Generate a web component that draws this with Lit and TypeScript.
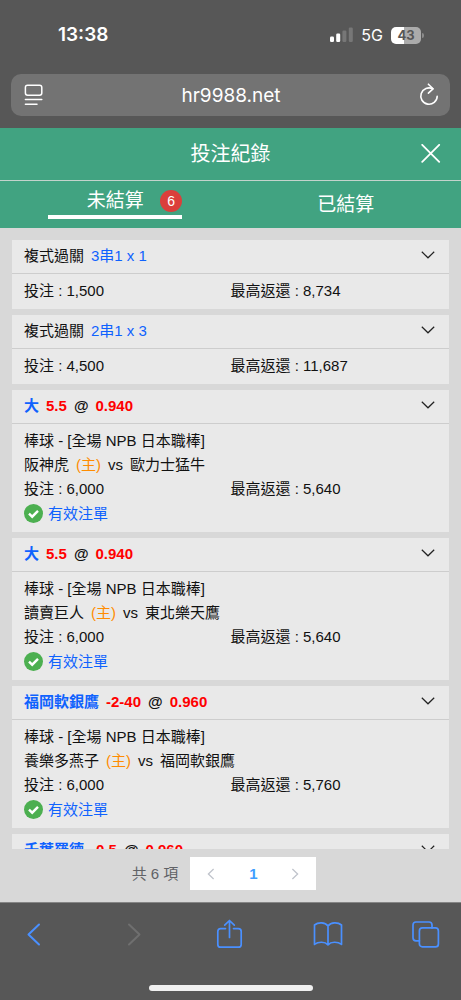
import { LitElement, html, css, svg, nothing } from "lit";
import { customElement, property, state } from "lit/decorators.js";
import { classMap } from "lit/directives/class-map.js";

interface Bet {
  kind: "combo" | "single";
  title: string;
  detail: string;
  odds?: string;
  league?: string;
  home?: string;
  away?: string;
  stake?: string;
  payout?: string;
}

const BETS: Bet[] = [
  { kind: "combo", title: "複式過關", detail: "3串1 x 1", stake: "1,500", payout: "8,734" },
  { kind: "combo", title: "複式過關", detail: "2串1 x 3", stake: "4,500", payout: "11,687" },
  { kind: "single", title: "大", detail: "5.5", odds: "0.940", league: "棒球 - [全場 NPB 日本職棒]", home: "阪神虎", away: "歐力士猛牛", stake: "6,000", payout: "5,640" },
  { kind: "single", title: "大", detail: "5.5", odds: "0.940", league: "棒球 - [全場 NPB 日本職棒]", home: "讀賣巨人", away: "東北樂天鷹", stake: "6,000", payout: "5,640" },
  { kind: "single", title: "福岡軟銀鷹", detail: "-2-40", odds: "0.960", league: "棒球 - [全場 NPB 日本職棒]", home: "養樂多燕子", away: "福岡軟銀鷹", stake: "6,000", payout: "5,760" },
  { kind: "single", title: "千葉羅德", detail: "-0.5", odds: "0.960" },
];

const resetButton = css`
  * { box-sizing: border-box; }
  button {
    margin: 0;
    padding: 0;
    border: 0;
    background: none;
    color: inherit;
    font: inherit;
    cursor: pointer;
  }
  svg { display: block; fill: none; }
`;

@customElement("status-bar")
export class StatusBar extends LitElement {
  static styles = css`
    :host {
      display: flex;
      justify-content: space-between;
      align-items: center;
      height: 74px;
      padding: 0 37px 4px 58px;
      color: #fff;
      font-family: Inter, sans-serif;
    }
    .time { font-size: 19px; line-height: 24px; font-weight: 600; }
    .right { display: flex; align-items: center; gap: 8px; }
    .net { font-size: 16px; line-height: 24px; }
    .battery { display: flex; align-items: center; gap: 1px; }
    .cell {
      width: 30px;
      height: 17px;
      border-radius: 5px;
      background: linear-gradient(90deg, #fff 43%, #ababab 43%);
      color: #575757;
      font-size: 13px;
      line-height: 17px;
      font-weight: 700;
      text-align: center;
    }
    .tip { width: 2px; height: 5px; border-radius: 0 2px 2px 0; background: #8b8b8b; }
    svg { display: block; }
  `;
  render() {
    return html`
      <span class="time">13:38</span>
      <span class="right">
        <svg width="23" height="16" viewBox="0 0 23 16" aria-hidden="true">
          <rect x="0" y="9.5" width="4" height="5.5" rx="1.2" fill="#fff" />
          <rect x="6.2" y="6.5" width="4" height="8.5" rx="1.2" fill="#fff" />
          <rect x="12.4" y="3.5" width="4" height="11.5" rx="1.2" fill="#777" />
          <rect x="18.8" y="0.5" width="4" height="14.5" rx="1.2" fill="#777" />
        </svg>
        <span class="net">5G</span>
        <span class="battery"><span class="cell">43</span><span class="tip"></span></span>
      </span>
    `;
  }
}

@customElement("address-bar")
export class AddressBar extends LitElement {
  static styles = [resetButton, css`
    :host { display: block; padding: 0 11px 12px; }
    .bar {
      display: flex;
      align-items: center;
      height: 42px;
      padding: 0 10px 0 13px;
      border-radius: 10px;
      background: #737373;
      color: #fff;
    }
    .url {
      flex: 1;
      min-width: 0;
      border: 0;
      padding: 2px 0 0;
      outline: 0;
      background: none;
      color: #fff;
      font: 19px/24px Inter, sans-serif;
      text-align: center;
    }
  `];
  render() {
    return html`
      <div class="bar">
        <button aria-label="Page settings">
          <svg width="20" height="22" viewBox="0 0 20 22" stroke="#fff" stroke-width="1.5" stroke-linecap="round">
            <rect x="1.4" y="1.2" width="16.4" height="10" rx="2.2" />
            <path d="M1.4 15.5H17.8M1.4 20.3H13" />
          </svg>
        </button>
        <input class="url" aria-label="Address" value="hr9988.net" readonly />
        <button aria-label="Reload">
          <svg width="22" height="24" viewBox="0 0 22 24" stroke="#fff" stroke-width="1.6" stroke-linecap="round" stroke-linejoin="round">
            <path d="M19.2 13.2A8.2 8.2 0 1 1 14.8 5.8" />
            <path d="M10.4 1.2L15 5.8L10.4 10.2" />
          </svg>
        </button>
      </div>
    `;
  }
}

@customElement("bet-card")
export class BetCard extends LitElement {
  @property({ attribute: false }) bet!: Bet;

  static styles = [resetButton, css`
    :host { display: block; background: #e9e9e9; color: #111; font-size: 15px; line-height: 24px; }
    .head {
      display: flex;
      align-items: center;
      justify-content: space-between;
      width: 100%;
      height: 34px;
      padding: 0 14px 3px 12px;
      border-bottom: 1px solid #cdcdcd;
      text-align: left;
    }
    .label, .teams { display: flex; gap: 7px; }
    .label { padding-top: 1px; }
    .single { font-weight: 700; }
    .blue { color: #0f62fe; }
    .red { color: #ff0000; }
    .orange { color: #ff8c00; }
    .body { padding: 5px 12px 6px; }
    .amounts { display: grid; grid-template-columns: 1fr 1fr; }
    .valid { display: flex; align-items: center; gap: 5px; height: 25px; color: #0f62fe; }
  `];

  render() {
    const b = this.bet;
    const single = b.kind === "single";
    return html`
      <button class="head">
        <span class=${classMap({ label: true, single })}>
          <span class=${classMap({ blue: single })}>${b.title}</span>
          <span class=${single ? "red" : "blue"}>${b.detail}</span>
          ${b.odds ? html`<span>@</span><span class="red">${b.odds}</span>` : nothing}
        </span>
        <svg width="14" height="8" viewBox="0 0 14 8" stroke="#222" stroke-width="1.2" aria-hidden="true">
          <path d="M0.8 0.8L7 6.8L13.2 0.8" />
        </svg>
      </button>
      ${b.stake
        ? html`<div class="body">
            ${single
              ? html`<div>${b.league}</div>
                  <div class="teams">
                    <span>${b.home}</span><span class="orange">(主)</span><span>vs</span><span>${b.away}</span>
                  </div>`
              : nothing}
            <div class="amounts"><span>投注 : ${b.stake}</span><span>最高返還 : ${b.payout}</span></div>
            ${single
              ? html`<div class="valid">
                  <svg width="19" height="19" viewBox="0 0 19 19" aria-hidden="true">
                    <circle cx="9.5" cy="9.5" r="9.5" fill="#4caf50" />
                    <path d="M5 9.6L8.2 12.7L14 6.8" stroke="#fff" stroke-width="2.4" />
                  </svg>
                  <span>有效注單</span>
                </div>`
              : nothing}
          </div>`
        : nothing}
    `;
  }
}

@customElement("browser-toolbar")
export class BrowserToolbar extends LitElement {
  static styles = [resetButton, css`
    :host { display: block; height: 98px; border-top: 1px solid #858585; color: #4a90ff; }
    .tools { display: flex; justify-content: space-between; padding: 11px 15px 0 14px; }
    .tools button { display: grid; place-items: center; width: 40px; height: 40px; }
    .tools .off { color: #6f6f6f; }
    .home { width: 164px; height: 6px; margin: 31px auto 0; border-radius: 3px; background: #f0f0f0; }
  `];
  private icon(shape: unknown) {
    return html`<svg width="30" height="32" viewBox="0 0 30 32" stroke="currentColor" stroke-width="1.7" stroke-linecap="round" stroke-linejoin="round">${shape}</svg>`;
  }
  render() {
    return html`
      <nav class="tools">
        <button aria-label="Back">${this.icon(svg`<path d="M20 6.5L9.5 16.5L20 26.5" stroke-width="2" />`)}</button>
        <button class="off" aria-label="Forward" disabled>${this.icon(svg`<path d="M12 6.5L22.5 16.5L12 26.5" stroke-width="2" />`)}</button>
        <button aria-label="Share">${this.icon(svg`
          <path d="M10.5 10.6H5.6Q2.8 10.6 2.8 13.4V26.4Q2.8 29.2 5.6 29.2H23.4Q26.2 29.2 26.2 26.4V13.4Q26.2 10.6 23.4 10.6H18.5" />
          <path d="M14.5 19.5V2.5M9.7 7.2L14.5 2.5L19.3 7.2" />`)}</button>
        <button aria-label="Bookmarks">${this.icon(svg`
          <path d="M15 8C12 4.2 5.5 3.8 1.5 7V26.4C5.5 23.4 12 23.6 15 26.8C18 23.6 24.5 23.4 28.5 26.4V7C24.5 3.8 18 4.2 15 8ZM15 8V26.8" />`)}</button>
        <button aria-label="Tabs">${this.icon(svg`
          <rect x="8.4" y="9.9" width="19" height="19" rx="3" />
          <path d="M8.4 22.8H5Q2 22.8 2 19.8V7Q2 4 5 4H18Q21 4 21 7V9.9" />`)}</button>
      </nav>
      <div class="home"></div>
    `;
  }
}

@customElement("app-root")
export class AppRoot extends LitElement {
  @state() private tab = 0;

  static styles = [resetButton, css`
    :host {
      display: flex;
      flex-direction: column;
      height: 100vh;
      background: #575757;
      font-family: "Liberation Sans", "Noto Sans CJK TC", sans-serif;
    }
    .page { flex: 1; min-height: 0; display: flex; flex-direction: column; background: #d8d8d8; }
    .top {
      display: grid;
      grid-template-columns: 1fr auto 1fr;
      align-items: center;
      height: 52px;
      padding: 0 20px;
      background: #41a381;
      color: #fff;
    }
    .top h1 { grid-column: 2; margin: 0; font-size: 20px; line-height: 28px; font-weight: 400; }
    .close { justify-self: end; }
    .tabs {
      display: grid;
      grid-template-columns: 1fr 1fr;
      height: 48px;
      border-top: 1px solid #c3d3cc;
      background: #41a381;
      color: #fff;
      font-size: 19px;
      line-height: 28px;
    }
    .tab { display: grid; place-items: center; }
    .name { position: relative; width: 134px; }
    .active .name { margin-bottom: 3px; border-bottom: 4px solid #fff; }
    .badge {
      position: absolute;
      right: 0;
      top: 3px;
      width: 22px;
      height: 22px;
      border-radius: 50%;
      background: #db3f3b;
      font-size: 14px;
      line-height: 22px;
      text-align: center;
    }
    .list {
      flex: 1;
      min-height: 0;
      display: flex;
      flex-direction: column;
      gap: 6px;
      padding: 12px 12px 0;
      overflow-y: auto;
      scrollbar-width: none;
    }
    .list bet-card { flex: none; }
    .pager {
      display: flex;
      justify-content: center;
      align-items: center;
      gap: 12px;
      padding: 8px 13px 12px 0;
      color: #606266;
      font-size: 15px;
      line-height: 24px;
    }
    .pages { display: flex; background: #fff; }
    .pages button { display: grid; place-items: center; width: 42px; height: 33px; }
    .pages .current { color: #409eff; font-weight: 700; }
  `];

  render() {
    return html`
      <status-bar></status-bar>
      <address-bar></address-bar>
      <main class="page">
        <header class="top">
          <h1>投注紀錄</h1>
          <button class="close" aria-label="關閉">
            <svg width="20" height="20" viewBox="0 0 20 20" stroke="#fff" stroke-width="1.8" stroke-linecap="round">
              <path d="M1.2 0.8L18.2 17.8M18.2 0.8L1.2 17.8" />
            </svg>
          </button>
        </header>
        <div class="tabs" role="tablist">
          ${["未結算", "已結算"].map((name, i) => html`
            <button
              role="tab"
              aria-selected=${this.tab === i}
              class=${classMap({ tab: true, active: this.tab === i })}
              @click=${() => (this.tab = i)}
            >
              <span class="name">${name}${i === 0 ? html`<span class="badge">${BETS.length}</span>` : nothing}</span>
            </button>`)}
        </div>
        <section class="list">${BETS.map((bet) => html`<bet-card .bet=${bet}></bet-card>`)}</section>
        <nav class="pager">
          <span>共 ${BETS.length} 項</span>
          <div class="pages">
            <button aria-label="上一頁" disabled>
              <svg width="8" height="12" viewBox="0 0 8 12" stroke="#c0c4cc" stroke-width="1.3"><path d="M6.6 1L1.4 6L6.6 11" /></svg>
            </button>
            <button class="current" aria-current="page">1</button>
            <button aria-label="下一頁" disabled>
              <svg width="8" height="12" viewBox="0 0 8 12" stroke="#c0c4cc" stroke-width="1.3"><path d="M1.4 1L6.6 6L1.4 11" /></svg>
            </button>
          </div>
        </nav>
      </main>
      <browser-toolbar></browser-toolbar>
    `;
  }
}
